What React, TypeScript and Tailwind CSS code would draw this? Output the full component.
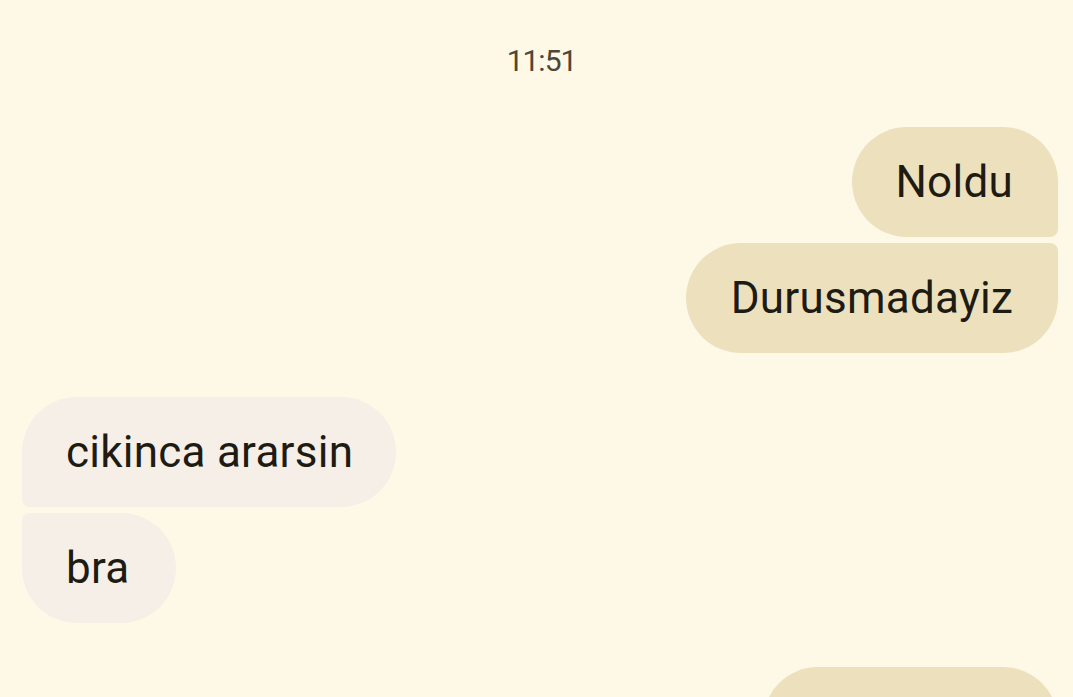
const sent = "bg-[#ede1bd]"
const recv = "bg-[#f5efe7]"

export default function App() {
    return <div className="min-h-[697px] h-[697px] overflow-hidden bg-[#fef8e7] font-['Roboto',sans-serif] text-[#1e1b13] tracking-[0.25px]">
        <div className="h-[127px] flex justify-center pt-[40px]">
            <div className="ml-[10px] text-[30px] leading-[42px] text-[#4d4639] tracking-[-1px]">11:51</div>
        </div>

        <div className="flex flex-col items-end gap-[6px] pr-[15px]">
            <div className={`${sent} h-[110px] flex items-center pl-[43px] pr-[45px] text-[44px] rounded-l-[55px] rounded-tr-[55px] rounded-br-[8px]`}>Noldu</div>
            <div className={`${sent} h-[110px] flex items-center pl-[45px] pr-[45px] text-[44px] rounded-l-[55px] rounded-tr-[8px] rounded-br-[55px]`}>Durusmadayiz</div>
        </div>

        <div className="flex flex-col items-start gap-[6px] pl-[22px] mt-[44px]">
            <div className={`${recv} h-[110px] flex items-center pl-[44px] pr-[43px] text-[44px] rounded-r-[55px] rounded-tl-[55px] rounded-bl-[8px]`}>cikinca ararsin</div>
            <div className={`${recv} h-[110px] flex items-center pl-[44px] pr-[47px] text-[44px] rounded-r-[55px] rounded-tl-[8px] rounded-bl-[55px]`}>bra</div>
        </div>

        <div className="flex flex-col items-end pr-[15px] mt-[44px]">
            <div className={`${sent} h-[110px] w-[295px] rounded-l-[55px] rounded-tr-[55px] rounded-br-[8px]`}></div>
        </div>
    </div>
}
